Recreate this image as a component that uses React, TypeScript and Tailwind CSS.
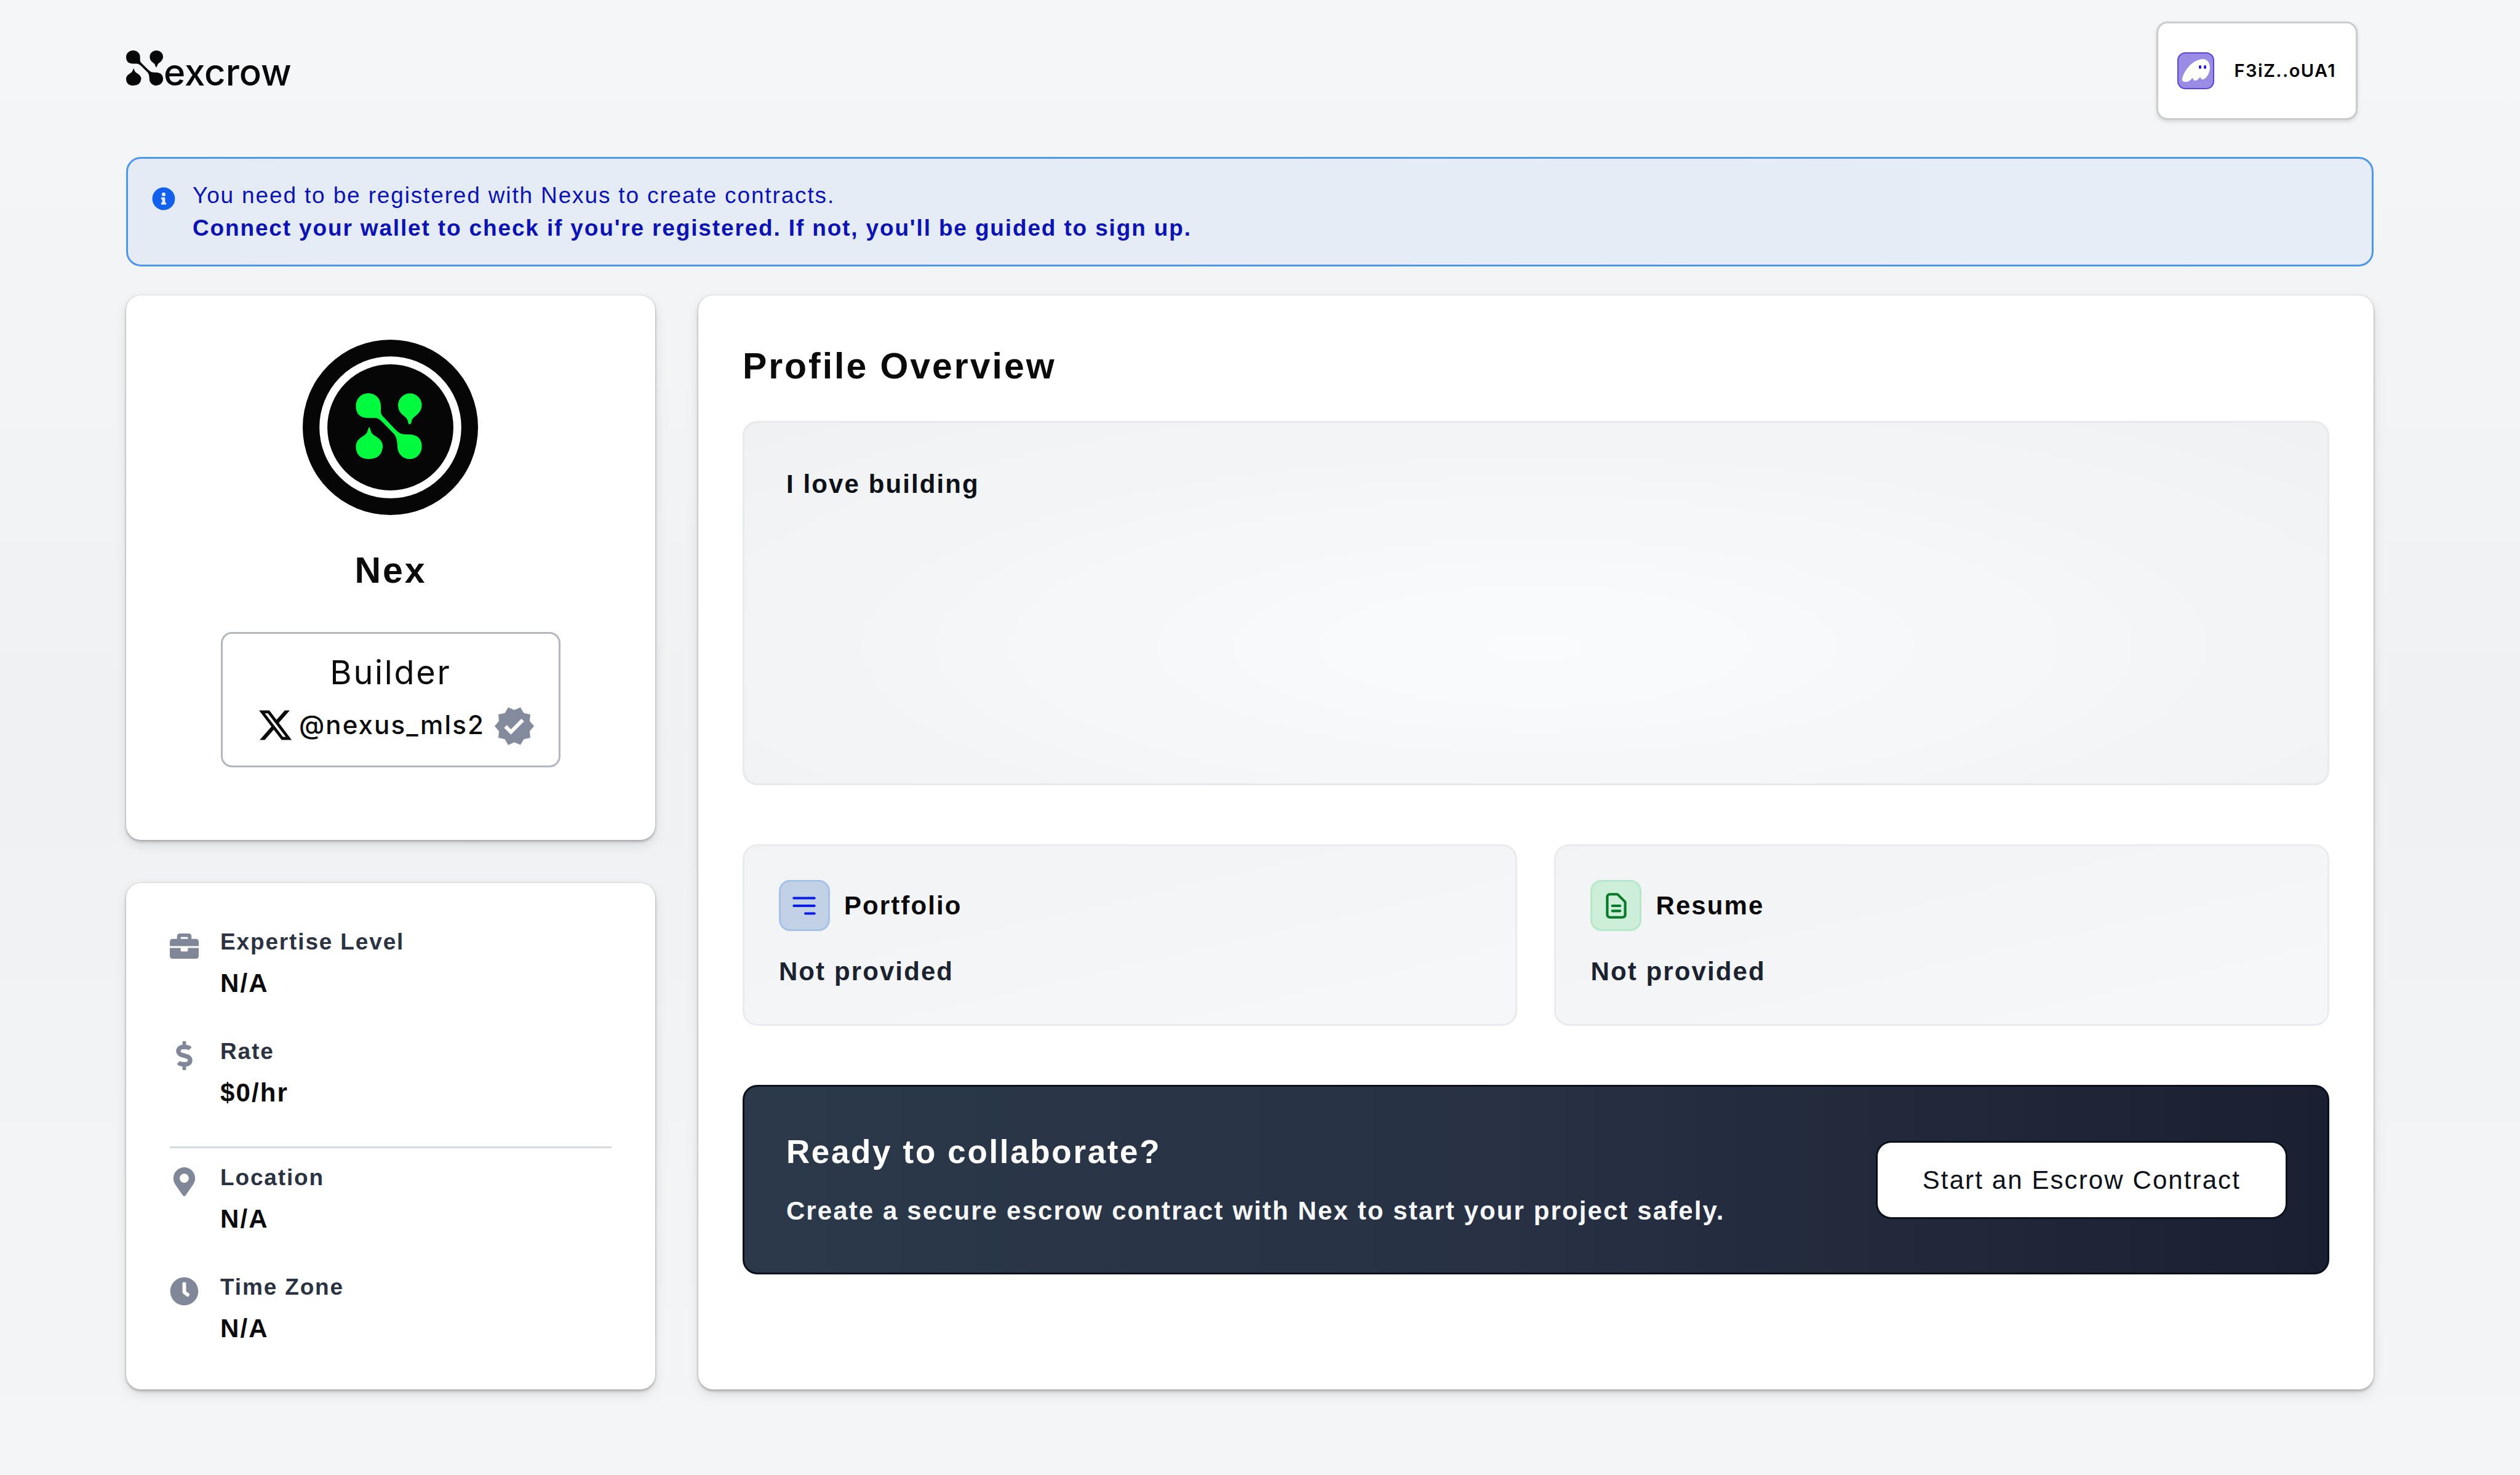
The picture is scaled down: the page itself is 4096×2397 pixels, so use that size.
import type { ReactNode } from "react";
import { FaBriefcase, FaClock, FaDollarSign, FaInfoCircle, FaMapMarkerAlt } from "react-icons/fa";
import { FaXTwitter } from "react-icons/fa6";
import { MdVerified } from "react-icons/md";

/* Four linked drops: the Nexus mark, drawn in a 325 x 324 box. */
function NexusMark() {
  return (
    <>
      <path d="M0 61A61 61 0 0 1 123 61V92Q124 106 138 119L194 178Q208 193 222 199Q232 203 265 203Q325 206 325 264A59 59 0 0 1 205 264Q204 222 190 203L128 139Q114 124 96 122H62Q0 122 0 61Z" />
      <path d="M208 59A58 58 0 0 1 325 59Q325 88 294 112Q276 124 274 140Q272 153 265 153Q258 153 257 140Q254 124 237 112Q208 92 208 59Z" />
      <path d="M0 264Q0 230 33 213Q54 202 58 185L63 170Q66 164 69 170L74 186Q78 202 98 212Q132 232 133 263Q126 324 66 324Q2 324 0 264Z" />
    </>
  );
}

function Avatar() {
  return (
    <svg viewBox="0 0 864 864" className="size-[285px]" role="img" aria-label="Nex avatar">
      <circle cx="432" cy="432" r="432" fill="#060606" />
      <circle cx="432" cy="432" r="330" fill="none" stroke="#ffffff" strokeWidth="39" />
      <g transform="translate(262 264)" fill="#00fa3e">
        <NexusMark />
      </g>
    </svg>
  );
}

function GhostIcon() {
  return (
    <svg viewBox="0 0 60 60" className="size-[60px] shrink-0" aria-hidden="true">
      <rect x="1" y="1" width="58" height="58" rx="12" fill="#9a8ce4" stroke="#5b43dd" strokeWidth="2" />
      <path
        d="M8 43C10 31 24 12 41 11C50 11 53 18 53 26C52 36 46 44 41 44C37 44 38 39 37 40C35 43 32 46 29 46C25 46 26 41 24 42C21 46 17 49 13 48C9 48 7 46 8 43Z"
        fill="#fffffb"
      />
      <rect x="35" y="21" width="4" height="6" rx="2" fill="#2a16e0" />
      <rect x="43" y="21" width="4" height="6" rx="2" fill="#2a16e0" />
    </svg>
  );
}

function Detail({ icon, label, value }: { icon: ReactNode; label: string; value: string }) {
  return (
    <div className="flex items-start gap-[35px]">
      <span className="mt-[10px] flex size-[47px] shrink-0 items-center justify-center text-[47px] text-[#7f8798]">{icon}</span>
      <dl>
        <dt className="text-[37px] leading-[53px] font-bold tracking-wider text-[#2b3342]">{label}</dt>
        <dd className="mt-[9px] text-[42px] leading-[63px] font-bold tracking-wider text-[#0b0b0c]">{value}</dd>
      </dl>
    </div>
  );
}

function LinkCard({ title, tile, path }: { title: string; tile: string; path: string }) {
  return (
    <section className="rounded-[24px] border-[3px] border-[#e9ebee] bg-linear-to-br from-[#f2f3f5] to-[#f6f7f9] px-[56px] pt-[55px] pb-[54px]">
      <div className="flex items-center gap-[23px]">
        <span className={`flex size-[83px] items-center justify-center rounded-[18px] border-[3px] ${tile}`}>
          <svg
            viewBox="0 0 24 24"
            className="size-[50px]"
            fill="none"
            stroke="currentColor"
            strokeWidth="2"
            strokeLinecap="round"
            strokeLinejoin="round"
            aria-hidden="true"
          >
            <path d={path} />
          </svg>
        </span>
        <h3 className="text-[42px] leading-[63px] font-bold tracking-wider text-[#0a0a0b]">{title}</h3>
      </div>
      <p className="mt-[34px] text-[42px] leading-[63px] font-bold tracking-wider text-[#1c2330]">Not provided</p>
    </section>
  );
}

const card =
  "rounded-[24px] bg-white shadow-[0_3px_4px_rgba(0,0,0,0.22),0_8px_20px_rgba(0,0,0,0.1),0_0_3px_rgba(0,0,0,0.18)]";

export default function App() {
  return (
    <div className="min-h-screen bg-linear-to-b from-[#f5f6f8] via-[#f0f1f3] to-[#f4f5f7] pr-[238px] pb-[138px] pl-[205px] font-['Liberation_Sans',Arial,sans-serif]">
      <header className="flex items-start justify-between pt-[35px] pr-[26px]">
        <a href="#home" className="mt-[47px] flex h-[57px] items-end gap-[1px] text-[#080808]" aria-label="Nexcrow home">
          <svg viewBox="0 0 325 324" className="h-[57px] w-[60px]" preserveAspectRatio="none" fill="currentColor" aria-hidden="true">
            <NexusMark />
          </svg>
          <span className="font-['Inter',sans-serif] text-[60px] leading-[44px] font-medium">excrow</span>
        </a>
        <button
          type="button"
          className="flex h-[160px] items-center gap-[32px] rounded-[18px] border-[3px] border-[#c9cbcd] bg-white pr-[32px] pl-[31px] shadow-[0_3px_6px_rgba(0,0,0,0.12)]"
        >
          <GhostIcon />
          <span className="font-['Inter',sans-serif] text-[29px] leading-[40px] font-semibold tracking-wider text-black">F3iZ..oUA1</span>
        </button>
      </header>

      <div
        role="status"
        className="mt-[60px] flex items-start gap-[28px] rounded-[24px] border-[3px] border-[#4a97ec] bg-linear-to-r from-[#e4ebf4] to-[#e6edf6] px-[39px] py-[33px] text-[37px] leading-[53px] tracking-wider text-[#0a12b8]"
      >
        <FaInfoCircle className="mt-[13px] size-[38px] shrink-0 text-[#1161ee]" aria-hidden="true" />
        <div>
          <p>You need to be registered with Nexus to create contracts.</p>
          <p className="font-bold">Connect your wallet to check if you're registered. If not, you'll be guided to sign up.</p>
        </div>
      </div>

      <main className="mt-[47px] grid grid-cols-[24fr_76fr] gap-[70px]">
        <div className="flex flex-col gap-[70px]">
          <section className={`flex flex-col items-center pt-[72px] pb-[118px] ${card}`}>
            <Avatar />
            <h1 className="mt-[54px] text-[59px] leading-[72px] font-bold tracking-wider text-[#0b0b0c]">Nex</h1>
            <div className="mt-[64px] rounded-[18px] border-[3px] border-[#b3b8c0] pt-[23px] pr-[37px] pb-[32px] pl-[56px] font-['Inter',sans-serif] text-[#0b0b0c]">
              <p className="pr-[19px] text-center text-[54px] leading-[80px] tracking-wider">Builder</p>
              <div className="mt-[15px] flex items-start">
                <a href="#x-profile" className="flex items-center gap-[9px] text-[42px] leading-[60px] font-medium tracking-wider">
                  <FaXTwitter className="size-[59px]" aria-hidden="true" />
                  @nexus_mls2
                </a>
                <MdVerified className="-my-[3px] ml-[13px] size-[70px] text-[#838b9c]" aria-label="Verified" />
              </div>
            </div>
          </section>

          <section className={`px-[71px] pt-[69px] pb-[68px] ${card}`}>
            <div className="flex flex-col gap-[53px]">
              <Detail icon={<FaBriefcase />} label="Expertise Level" value="N/A" />
              <Detail icon={<FaDollarSign />} label="Rate" value="$0/hr" />
            </div>
            <hr className="mt-[56px] mb-[21px] border-t-[3px] border-[#d5dade]" />
            <div className="flex flex-col gap-[53px]">
              <Detail icon={<FaMapMarkerAlt />} label="Location" value="N/A" />
              <Detail icon={<FaClock />} label="Time Zone" value="N/A" />
            </div>
          </section>
        </div>

        <section className={`px-[72px] pt-[79px] pb-[72px] ${card}`}>
          <h2 className="text-[59px] leading-[72px] font-bold tracking-wider text-[#0b0b0c]">Profile Overview</h2>
          <div className="mt-[53px] min-h-[592px] rounded-[24px] border-[3px] border-[#e7e9ed] bg-[radial-gradient(ellipse_at_50%_62%,#fafbfc_0%,#f7f8f9_30%,#f3f4f6_65%,#f0f1f3_100%)] p-[68px]">
            <p className="text-[42px] leading-[63px] font-bold tracking-wider text-[#0d1118]">I love building</p>
          </div>
          <div className="mt-[96px] grid grid-cols-2 gap-[60px]">
            <LinkCard title="Portfolio" tile="border-[#a6c2e8] bg-[#c3d1e6] text-[#0a1ee6]" path="M4 6h16M4 12h16m-7 6h7" />
            <LinkCard
              title="Resume"
              tile="border-[#b4e8c8] bg-[#cdeed9] text-[#067a26]"
              path="M9 12h6m-6 4h6m2 5H7a2 2 0 01-2-2V5a2 2 0 012-2h5.586a1 1 0 01.707.293l5.414 5.414a1 1 0 01.293.707V19a2 2 0 01-2 2z"
            />
          </div>
          <div className="mt-[96px] flex items-center justify-between gap-[60px] rounded-[24px] border-[3px] border-[#0a101c] bg-linear-to-r from-[#2b394a] via-[#273143] to-[#1a2031] px-[68px] py-[69px]">
            <div>
              <h2 className="text-[53px] leading-[74px] font-bold tracking-wider text-white">Ready to collaborate?</h2>
              <p className="mt-[27px] text-[42px] leading-[63px] font-bold tracking-wider text-[#f6f7f9]">
                Create a secure escrow contract with Nex to start your project safely.
              </p>
            </div>
            <button
              type="button"
              className="h-[121px] shrink-0 rounded-[22px] bg-white px-[73px] text-[42px] leading-[63px] tracking-wider text-[#0d1118] shadow-[0_0_0_3px_#0a101c]"
            >
              Start an Escrow Contract
            </button>
          </div>
        </section>
      </main>
    </div>
  );
}
